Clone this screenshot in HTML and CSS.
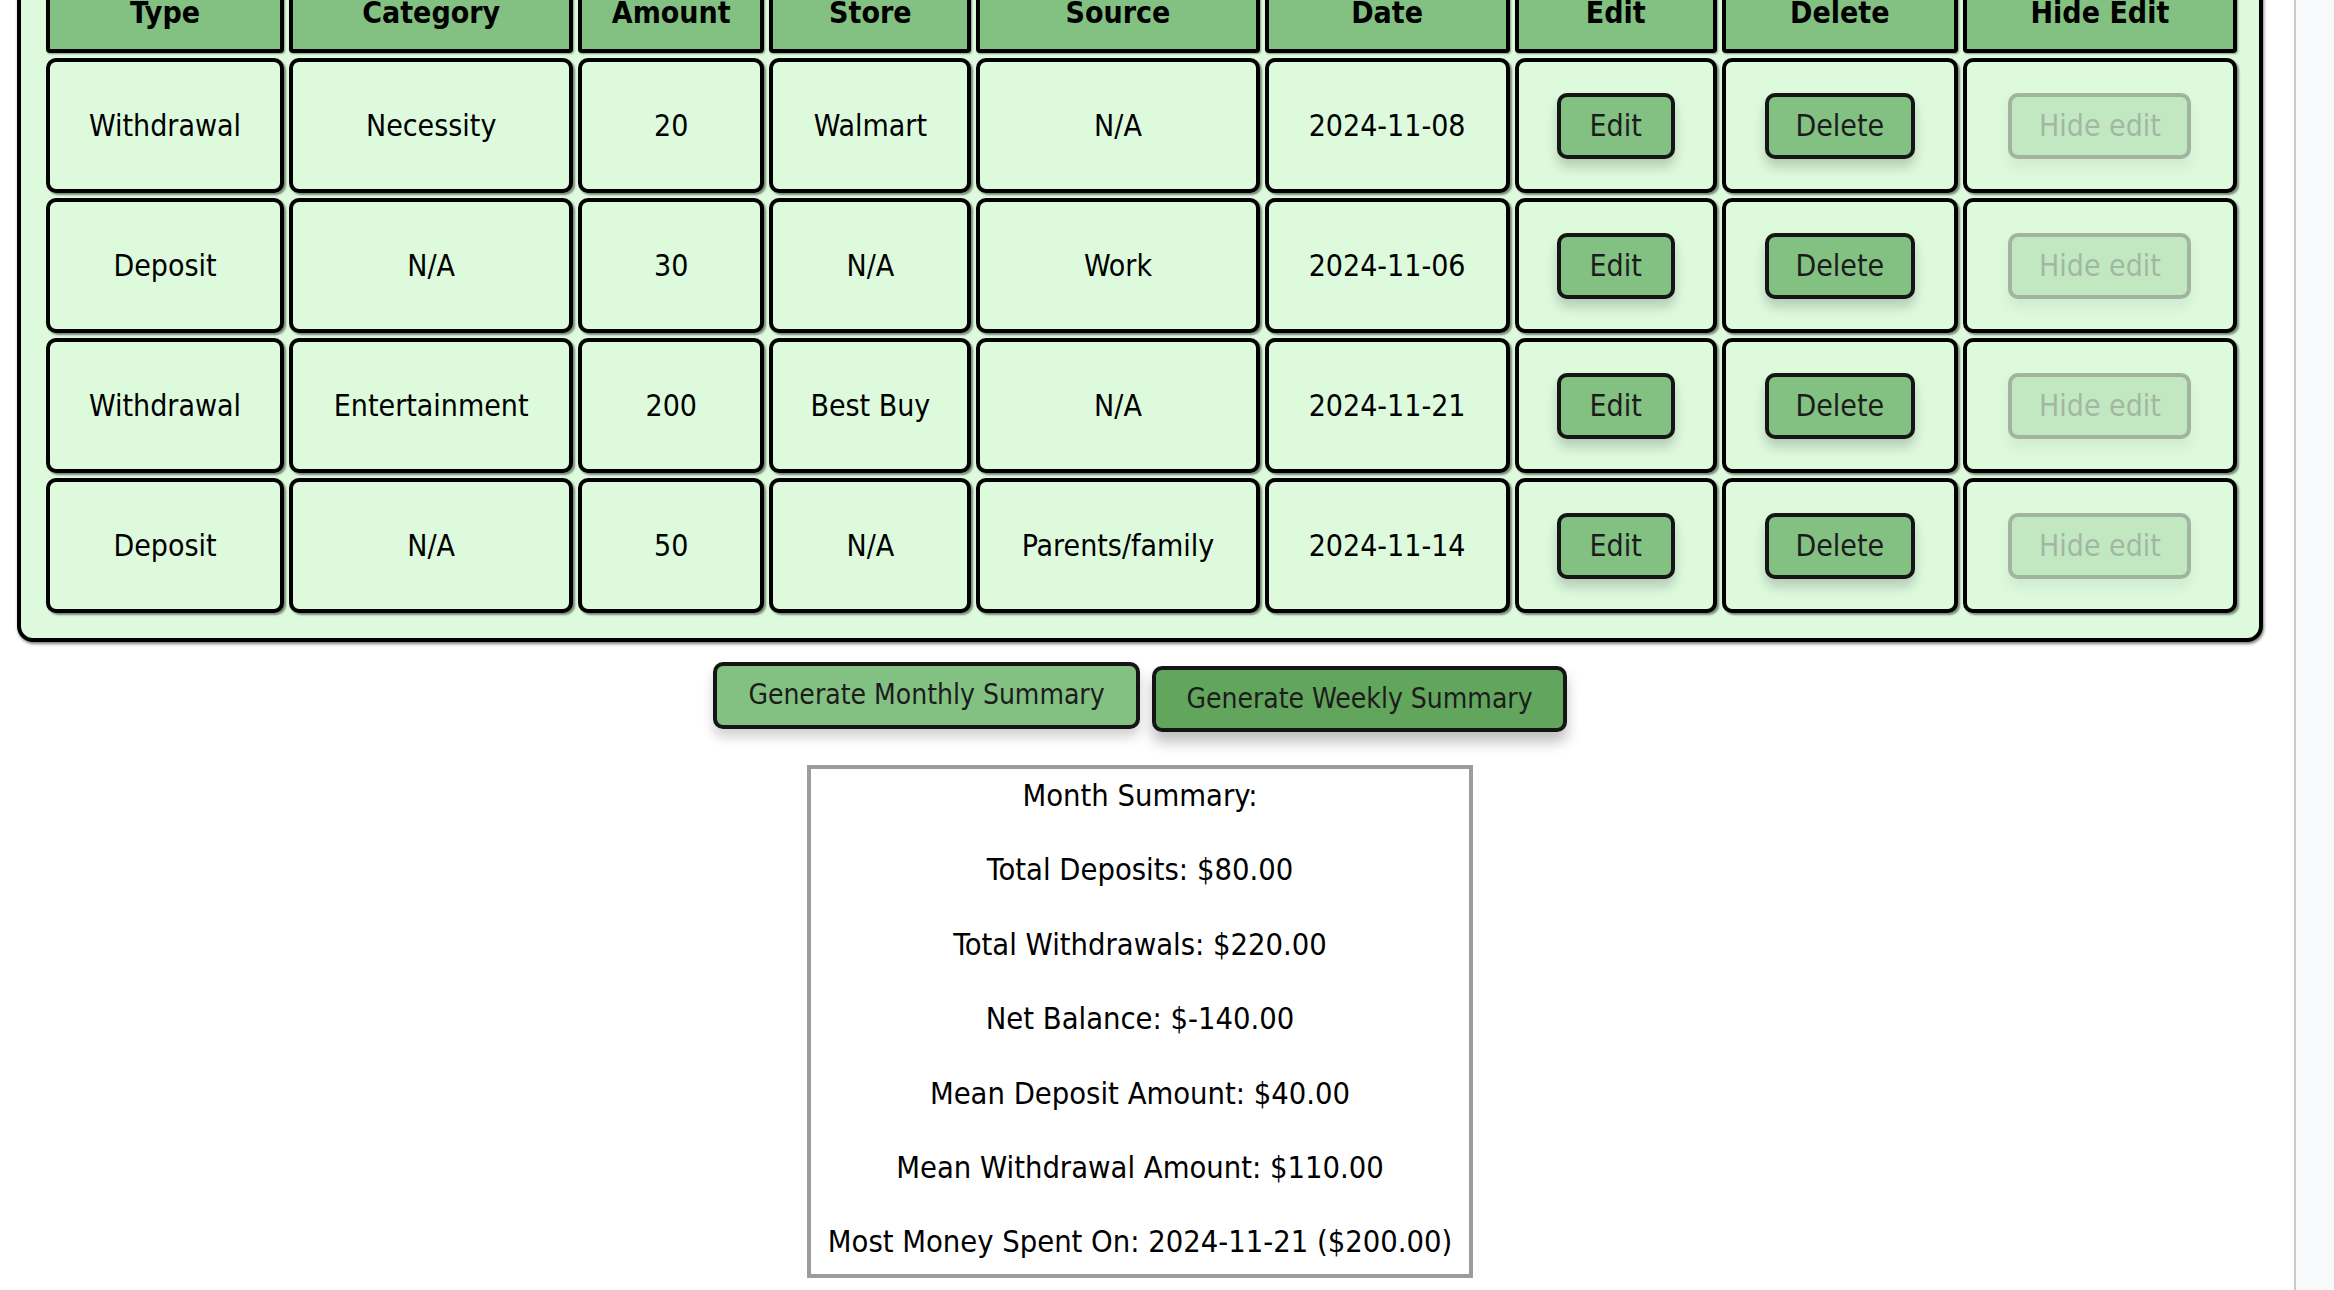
FILE: index.html
```html
<!DOCTYPE html>
<html lang="en">
<head>
  <meta charset="UTF-8" />
  <meta name="viewport" content="width=device-width, initial-scale=1.0"/>
  <title>Budget Tracker</title>
  <link rel="stylesheet" href="styles.css">
</head>
<body>

  <div class="page">
    <div class="table-box">
      <table class="transactions">
        <colgroup>
          <col class="col-type">
          <col class="col-category">
          <col class="col-amount">
          <col class="col-store">
          <col class="col-source">
          <col class="col-date">
          <col class="col-edit">
          <col class="col-delete">
          <col class="col-hide">
        </colgroup>
        <thead>
          <tr>
            <th>Type</th>
            <th>Category</th>
            <th>Amount</th>
            <th>Store</th>
            <th>Source</th>
            <th>Date</th>
            <th>Edit</th>
            <th>Delete</th>
            <th>Hide Edit</th>
          </tr>
        </thead>
        <tbody>
          <tr class="row">
            <td>Withdrawal</td>
            <td>Necessity</td>
            <td>20</td>
            <td>Walmart</td>
            <td>N/A</td>
            <td>2024-11-08</td>
            <td><button class="btn btn-edit">Edit</button></td>
            <td><button class="btn btn-delete">Delete</button></td>
            <td><button class="btn btn-hide" disabled>Hide edit</button></td>
          </tr>
          <tr class="row">
            <td>Deposit</td>
            <td>N/A</td>
            <td>30</td>
            <td>N/A</td>
            <td>Work</td>
            <td>2024-11-06</td>
            <td><button class="btn btn-edit">Edit</button></td>
            <td><button class="btn btn-delete">Delete</button></td>
            <td><button class="btn btn-hide" disabled>Hide edit</button></td>
          </tr>
          <tr class="row">
            <td>Withdrawal</td>
            <td>Entertainment</td>
            <td>200</td>
            <td>Best Buy</td>
            <td>N/A</td>
            <td>2024-11-21</td>
            <td><button class="btn btn-edit">Edit</button></td>
            <td><button class="btn btn-delete">Delete</button></td>
            <td><button class="btn btn-hide" disabled>Hide edit</button></td>
          </tr>
          <tr class="row">
            <td>Deposit</td>
            <td>N/A</td>
            <td>50</td>
            <td>N/A</td>
            <td>Parents/family</td>
            <td>2024-11-14</td>
            <td><button class="btn btn-edit">Edit</button></td>
            <td><button class="btn btn-delete">Delete</button></td>
            <td><button class="btn btn-hide" disabled>Hide edit</button></td>
          </tr>
        </tbody>
      </table>
    </div>

    <div class="summary-buttons">
      <button class="btn btn-monthly">Generate Monthly Summary</button>
      <button class="btn btn-weekly">Generate Weekly Summary</button>
    </div>

    <div class="summary">
      <p>Month Summary:</p>
      <p>Total Deposits: $80.00</p>
      <p>Total Withdrawals: $220.00</p>
      <p>Net Balance: $-140.00</p>
      <p>Mean Deposit Amount: $40.00</p>
      <p>Mean Withdrawal Amount: $110.00</p>
      <p>Most Money Spent On: 2024-11-21 ($200.00)</p>
    </div>
  </div>

  <div class="scrollbar"></div>

</body>
</html>
```

FILE: styles.css
```css
html {
  overflow: hidden;
}

body {
  margin: 0;
  display: flex;
  min-height: 100vh;
  background-color: white;
  color: black;
  font-family: "DejaVu Sans Condensed", "DejaVu Sans", sans-serif;
  font-stretch: condensed;
  font-size: 30px;
}

.page {
  flex: 1;
  margin: -56px 31px 0 17px;
}

.scrollbar {
  width: 38px;
  border-left: 2px solid #c9c9c9;
  background: #f8f9fb;
}

.table-box {
  background: #ddfadd;
  border: 4px solid black;
  border-radius: 16px;
  padding: 20px 17px 20px 20px;
  box-shadow: 1px 2px 3px rgba(0, 0, 0, 0.5);
}

.transactions {
  width: 100%;
  table-layout: fixed;
  border-spacing: 5px;
}

.col-type { width: 238px; }
.col-category { width: 284px; }
.col-amount { width: 186px; }
.col-store { width: 202px; }
.col-source { width: 283px; }
.col-date { width: 245px; }
.col-edit { width: 202px; }
.col-delete { width: 236px; }
.col-hide { width: 274px; }

.transactions th {
  background: #82c182;
  border: 4px solid black;
  border-radius: 4px;
  padding: 18px 0;
  line-height: 36px;
  font-weight: bold;
  box-shadow: 1px 1px 2px rgba(0, 0, 0, 0.4);
}

.transactions .row {
  height: 135px;
}

.transactions td {
  background: #ddfadd;
  border: 4px solid black;
  border-radius: 10px;
  padding: 0 6px;
  line-height: 36px;
  text-align: center;
  box-shadow: 2px 2px 2px rgba(0, 0, 0, 0.45);
}

.btn {
  font: inherit;
  line-height: 36px;
  padding: 11px 0;
  background: #82c182;
  color: #1c1c1c;
  border: 4px solid #151515;
  border-radius: 10px;
  box-shadow: 0 8px 12px rgba(0, 0, 0, 0.18);
  cursor: pointer;
}

.btn-edit { width: 118px; }
.btn-delete { width: 150px; }

.btn-hide {
  width: 183px;
  opacity: 0.3;
  cursor: default;
}

.summary-buttons {
  display: flex;
  justify-content: center;
  align-items: flex-start;
  gap: 12px;
  margin-top: 20px;
}

.btn-monthly {
  width: 427px;
  font-size: 28px;
  padding: 11px 0 12px;
}

.btn-weekly {
  width: 415px;
  font-size: 28px;
  padding: 11px 0;
  background: #62a65d;
  transform: translateY(4px);
  box-shadow: 0 10px 14px rgba(0, 0, 0, 0.25);
}

.summary {
  width: 666px;
  box-sizing: border-box;
  margin: 36px auto 0;
  padding: 9px 10px 14px;
  background: white;
  border: 4px solid #9c9c9c;
  text-align: center;
  font-size: 30.6px;
}

.summary p {
  margin: 0;
  line-height: 36px;
}

.summary p + p {
  margin-top: 38.4px;
}
```
